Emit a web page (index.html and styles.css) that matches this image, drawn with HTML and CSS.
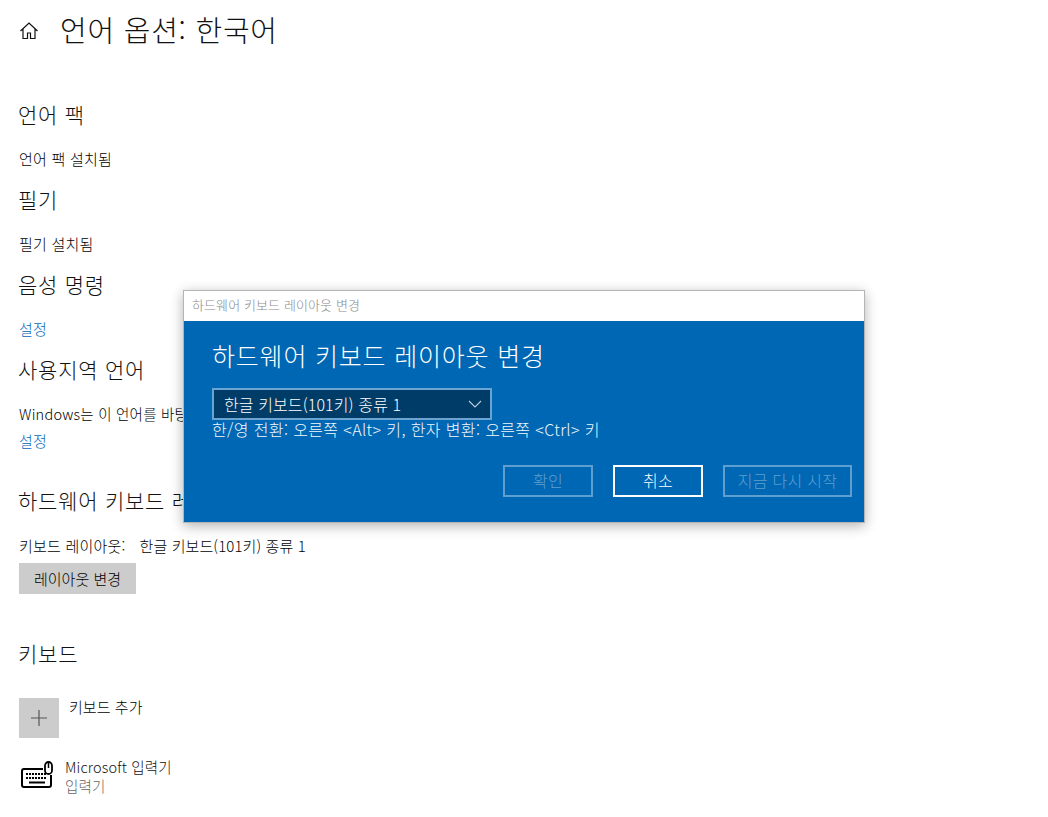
FILE: index.html
```html
<!DOCTYPE html>
<html lang="ko">
<head>
<meta charset="utf-8">
<title>언어 옵션: 한국어</title>
<link rel="stylesheet" href="styles.css">
</head>
<body>
<main class="page">
  <header class="top">
    <svg class="home" width="20" height="20" viewBox="0 0 20 20" fill="none" stroke="#111" stroke-width="1.2"><path d="M1.5 10 10 2l8.5 8M4 8v9.5h4.5V12h3v5.500H16V8"/></svg>
    <h1 class="title">언어 옵션: 한국어</h1>
  </header>
  <h2 class="head first">언어 팩</h2>
  <p class="line l1">언어 팩 설치됨</p>
  <h2 class="head h2b">필기</h2>
  <p class="line l1">필기 설치됨</p>
  <h2 class="head h2b">음성 명령</h2>
  <p class="line l1"><a class="link">설정</a></p>
  <h2 class="head h2b">사용지역 언어</h2>
  <p class="line l2">Windows는 이 언어를 바탕</p>
  <p class="line l3"><a class="link">설정</a></p>
  <h2 class="head h2c">하드웨어 키보드 레이아웃</h2>
  <p class="line l4"><span class="kl">키보드 레이아웃:</span><span class="kv">한글 키보드(101키) 종류 1</span></p>
  <div class="btn-gray">레이아웃 변경</div>
  <h2 class="head h2d">키보드</h2>
  <div class="add">
    <div class="plus"><svg width="18" height="18" viewBox="0 0 18 18" stroke="#555" stroke-width="1.2"><path d="M9 1v16M1 9h16"/></svg></div>
    <span class="add-label">키보드 추가</span>
  </div>
  <div class="ime">
    <svg class="kb" width="34" height="28" viewBox="0 0 34 28" fill="none" stroke="#000"><path stroke-width="2" d="M23 8H4a2 2 0 0 0-2 2v14a2 2 0 0 0 2 2h25a2 2 0 0 0 2-2V14"/><rect x="25" y="1" width="7" height="12" rx="3.500" stroke-width="1.800"/><path stroke-width="1.500" d="M28.500 1v6"/><path stroke-width="2" stroke-dasharray="2 1" d="M6 13h21M6 17h21"/><path stroke-width="2" d="M9 21.500h16"/></svg>
    <div class="ime-text"><div class="ime-name">Microsoft 입력기</div><div class="ime-sub">입력기</div></div>
  </div>
</main>

<section class="dialog">
  <div class="dlg-title">하드웨어 키보드 레이아웃 변경</div>
  <div class="dlg-body">
    <div class="dlg-head">하드웨어 키보드 레이아웃 변경</div>
    <div class="select"><span>한글 키보드(101키) 종류 1</span><svg width="14" height="8" viewBox="0 0 14 8" fill="none" stroke="#b9cfe0" stroke-width="1.100"><path d="M1 1l6 6 6-6"/></svg></div>
    <div class="hint">한/영 전환: 오른쪽 &lt;Alt&gt; 키, 한자 변환: 오른쪽 &lt;Ctrl&gt; 키</div>
    <div class="actions">
      <div class="dbtn off w1">확인</div>
      <div class="dbtn on w1">취소</div>
      <div class="dbtn off w2">지금 다시 시작</div>
    </div>
  </div>
</section>
</body>
</html>
```
FILE: styles.css
```css
* { box-sizing: border-box; }
html, body { margin: 0; height: 100%; background: #fff; overflow: hidden; }
body { font-family: "Noto Sans CJK KR", "Noto Sans", sans-serif; color: #000; position: relative; }
p, h1, h2 { margin: 0; font-weight: 400; }
.page { padding: 0 0 0 19px; }
.top { display: flex; align-items: center; height: 60px; gap: 21px; }
.home { flex: none; margin-top: 1px; }
.title { font-size: 29px; line-height: 58px; letter-spacing: 0.75px; color: #111; font-weight: 300; align-self: flex-start; }
.head { font-size: 21px; line-height: 24px; letter-spacing: 0.75px; color: #111; font-weight: 300; margin-left: -1px; }
.first { margin-top: 42px; }
.line { font-size: 15px; line-height: 20px; letter-spacing: 0.22px; white-space: nowrap; font-weight: 300; }
.l1 { margin-top: 23px; }
.h2b { margin-top: 18px; }
.l2 { margin-top: 23px; font-size: 14.5px; }
.l3 { margin-top: 7px; }
.h2c { margin-top: 37px; }
.l4 { margin-top: 24px; display: flex; gap: 14px; }
.kv { letter-spacing: 0.1px; }
.link { color: #0067b8; }
.btn-gray { width: 117px; height: 31px; margin-top: 7px; background: #ccc; font-size: 15px; font-weight: 300; line-height: 31px; text-align: center; }
.h2d { margin-top: 47px; }
.add { display: flex; margin-top: 33px; gap: 10px; }
.plus { width: 40px; height: 40px; background: #ccc; display: flex; align-items: center; justify-content: center; }
.add-label { font-size: 15px; line-height: 18px; letter-spacing: 0.05px; font-weight: 300; }
.ime { display: flex; margin-top: 21px; gap: 11px; align-items: center; margin-left: 1px; }
.kb { flex: none; margin-top: -4px; }
.ime-text { font-size: 14.5px; line-height: 19px; letter-spacing: 0.15px; font-weight: 300; margin-top: -2px; }
.ime-name { color: #111; }
.ime-sub { color: #666; }
.dialog { position: absolute; left: 183px; top: 290px; width: 682px; height: 233px; border: 1px solid #b5b5b5; box-shadow: 0 3px 12px rgba(0,0,0,.3); background: #0067b4; }
.dlg-title { height: 30px; background: #fff; color: #8a8a8a; font-size: 13px; letter-spacing: 0.1px; font-weight: 300; line-height: 28px; padding-left: 8px; }
.dlg-body { padding: 17px 12px 0 28px; color: #fff; font-weight: 300; }
.dlg-head { font-size: 25px; line-height: 34px; letter-spacing: 0.8px; font-weight: 300; }
.select { display: flex; align-items: center; justify-content: space-between; width: 280px; height: 32px; margin-top: 16px; padding: 0 8px 0 10px; background: #003c68; border: 2px solid #6ba3d1; font-size: 16px; letter-spacing: 0.1px; }
.hint { font-size: 16px; line-height: 18px; letter-spacing: 0.37px; color: #f2f7fb; }
.actions { display: flex; justify-content: flex-end; gap: 20px; margin-top: 27px; }
.dbtn { height: 32px; font-size: 16px; line-height: 27px; text-align: center; border: 2px solid; letter-spacing: 0.3px; }
.w1 { width: 90px; }
.w2 { width: 129px; }
.off { border-color: #5f9fcf; color: #5f9fcf; }
.on { border-color: #fff; color: #fff; }
```
